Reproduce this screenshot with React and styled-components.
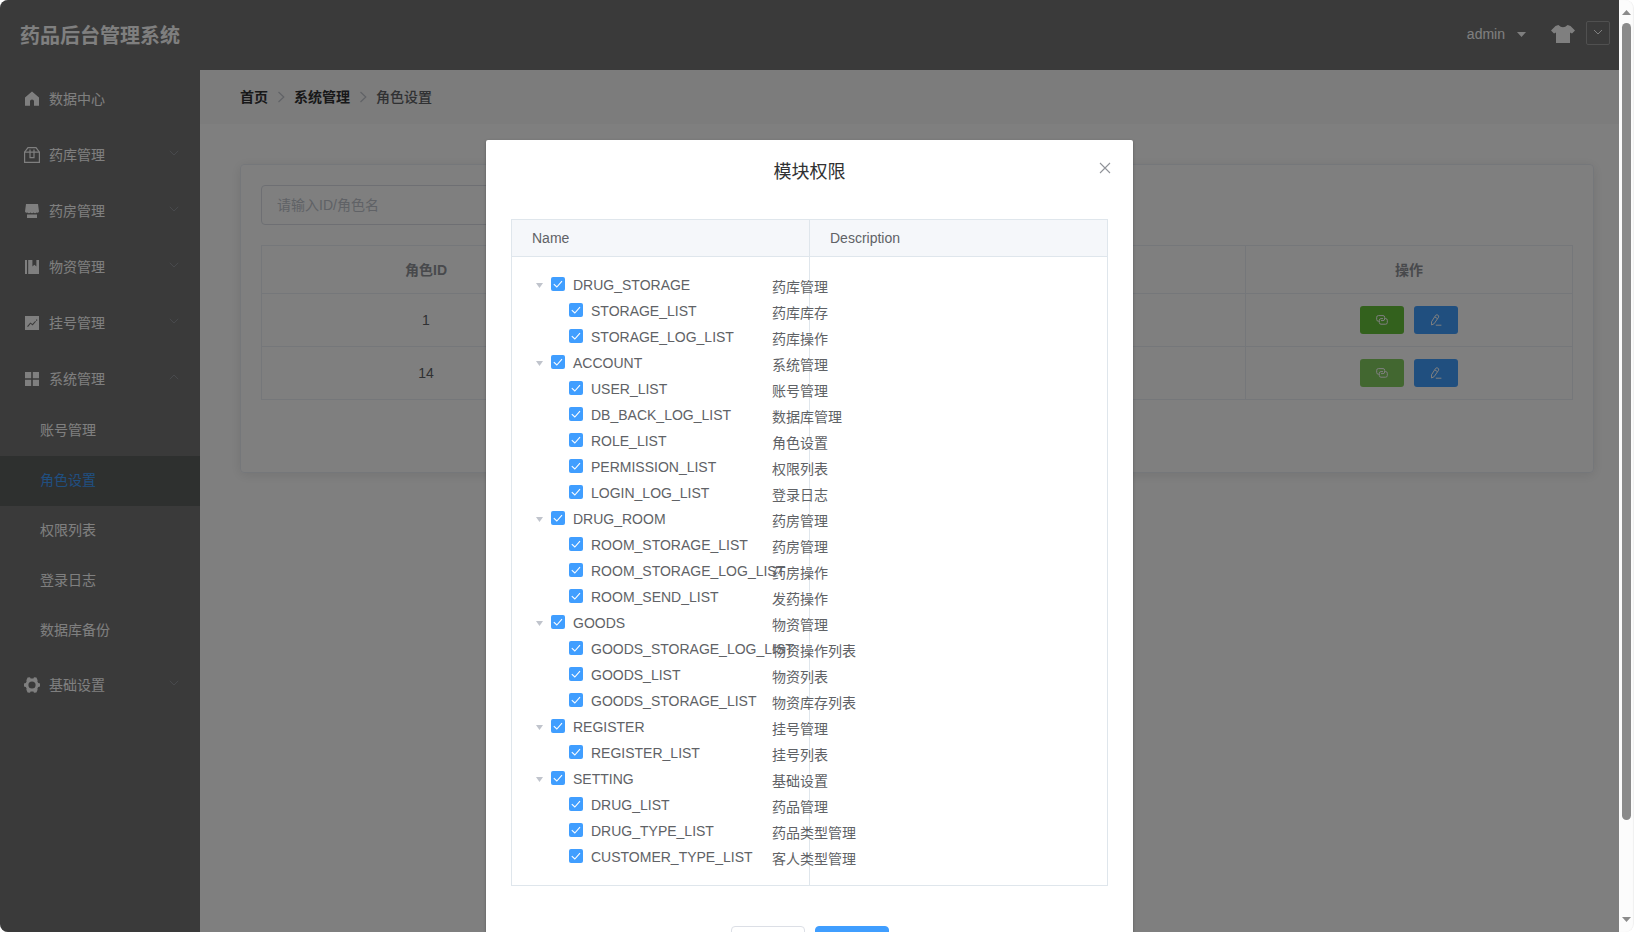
import { useState } from "react";
import styled, { createGlobalStyle } from "styled-components";

const GlobalStyle = createGlobalStyle`
  * {
    box-sizing: border-box;
  }

  body {
    margin: 0;
    background-color: #fff;
    font-family: "Liberation Sans", Arial, "Noto Sans CJK SC", sans-serif;
    font-size: 14px;
    color: #606266;
    overflow: hidden;
  }
`

const Window = styled.div`
  display: flex;
  width: 1634px;
  height: 932px;
  border-radius: 8px;
  overflow: hidden;
`

const Page = styled.div`
  position: relative;
  display: flex;
  flex-direction: column;
  flex: 1;
  min-width: 0;
  background-color: #fff;
  overflow: hidden;
`

const Header = styled.header`
  display: flex;
  align-items: center;
  justify-content: space-between;
  height: 70px;
  flex-shrink: 0;
  padding: 0 9px 0 20px;
  background-color: #747474;
  color: #fff;
`

const Logo = styled.h1`
  margin: 0;
  padding-top: 2px;
  font-size: 20px;
  line-height: 30px;
  font-weight: 700;
`

const HeaderTools = styled.div`
  display: flex;
  align-items: center;
  padding-bottom: 2px;
`

const UserMenu = styled.div`
  display: flex;
  align-items: center;
  gap: 12px;
  margin-right: 25px;
  line-height: 20px;
`

const UserCaret = styled.svg`
  width: 9px;
  height: 5px;
  fill: #fff;
  margin-top: 1px;
`

const Shirt = styled.svg`
  width: 24px;
  height: 18px;
  fill: #fff;
  margin-right: 11px;
`

const ThemeBox = styled.button`
  display: flex;
  align-items: center;
  justify-content: center;
  width: 24px;
  height: 24px;
  padding: 0 0 2px;
  margin-bottom: 2px;
  border: 1px solid #a0a0a0;
  border-radius: 2px;
  background: none;
  color: #fff;
`

const Body = styled.div`
  display: flex;
  flex: 1;
  min-height: 0;
`

const Sidebar = styled.nav`
  width: 200px;
  flex-shrink: 0;
  background-color: #747474;
  color: #fff;
`

const MenuItem = styled.div`
  display: flex;
  align-items: center;
  height: 56px;
  padding: 2px 20px 0;
`

const MenuIcon = styled.svg`
  width: 18px;
  height: 18px;
  margin: 0 8px 0 3px;
  fill: currentColor;
`

const MenuLabel = styled.span`
  flex: 1;
  line-height: 20px;
`

const SubItem = styled.div`
  display: flex;
  align-items: center;
  height: 50px;
  padding: 0 0 4px 40px;
  background-color: ${(props) => (props.$active ? "#5c605f" : "transparent")};
  color: ${(props) => (props.$active ? "#409eff" : "#fff")};
`

const ArrowIcon = styled.svg`
  width: 12px;
  height: 12px;
  margin-bottom: 4px;
  fill: none;
  stroke: #909399;
  transform: ${(props) => (props.$open ? "rotate(180deg)" : "none")};
`

const Main = styled.main`
  flex: 1;
  min-width: 0;
  display: flex;
  flex-direction: column;
`

const Breadcrumb = styled.div`
  display: flex;
  align-items: center;
  height: 54px;
  padding: 0 40px;
  background-color: #f8f8f8;
`

const Crumb = styled.span`
  line-height: 20px;
  color: ${(props) => (props.$link ? "#303133" : "#606266")};
  font-weight: ${(props) => (props.$link ? 700 : 500)};
`

const CrumbArrow = styled.svg`
  width: 14px;
  height: 14px;
  margin: 0 6px;
  fill: none;
  stroke: #c0c4cc;
  stroke-width: 1.2;
`

const Card = styled.section`
  width: 1354px;
  height: 309px;
  margin: 40px;
  padding: 20px;
  border: 1px solid #ebeef5;
  border-radius: 4px;
  box-shadow: 0 2px 12px 0 rgba(0, 0, 0, 0.1);
`

const SearchInput = styled.input`
  display: block;
  width: 300px;
  height: 40px;
  padding: 0 15px;
  margin-bottom: 20px;
  border: 1px solid #dcdfe6;
  border-radius: 4px;
  font: inherit;

  &::placeholder {
    color: #c0c4cc;
  }
`

const RoleTable = styled.div`
  display: grid;
  grid-template-columns: 331px repeat(3, 327px);
  grid-template-rows: 48px 53px 53px;
  border-top: 1px solid #ebeef5;
  box-shadow: inset 1px 0 0 #ebeef5;
`

const RoleCell = styled.div`
  display: flex;
  align-items: center;
  justify-content: center;
  gap: 10px;
  padding-bottom: ${(props) => (props.$head ? 2 : 0)}px;
  border-right: 1px solid #ebeef5;
  border-bottom: 1px solid #ebeef5;
  color: ${(props) => (props.$head ? "#909399" : "#606266")};
  font-weight: ${(props) => (props.$head ? 700 : 400)};
`

const ActionButton = styled.button`
  display: flex;
  align-items: center;
  justify-content: center;
  width: 44px;
  height: 28px;
  padding: 0;
  border: none;
  border-radius: 3px;
  background-color: ${(props) => props.$color};

  svg {
    width: 12px;
    height: 12px;
    fill: none;
    stroke: #fff;
  }
`

const Overlay = styled.div`
  position: absolute;
  inset: 0;
  display: flex;
  align-items: flex-start;
  justify-content: center;
  padding-top: 140px;
  background-color: rgba(0, 0, 0, 0.5);
  overflow: hidden;
`

const Dialog = styled.div`
  flex-shrink: 0;
  width: 647px;
  height: 880px;
  padding: 0 25px;
  border-radius: 2px;
  background-color: #fff;
  box-shadow: 0 1px 3px rgba(0, 0, 0, 0.3);
`

const DialogHeader = styled.div`
  display: grid;
  grid-template-columns: 16px 1fr 16px;
  height: 79px;
  margin: 0 -5px;
  padding-top: 20px;
`

const DialogTitle = styled.h2`
  grid-column: 2;
  margin: 0;
  font-size: 18px;
  line-height: 24px;
  font-weight: 400;
  text-align: center;
  color: #303133;
`

const CloseButton = styled.button`
  width: 16px;
  height: 16px;
  padding: 0;
  border: none;
  background: none;

  svg {
    display: block;
    width: 16px;
    height: 16px;
    stroke: #909399;
    stroke-width: 1.1;
  }
`

const TreeTable = styled.div`
  border: 1px solid #dfe6ec;
`

const TreeHead = styled.div`
  display: grid;
  grid-template-columns: 298px 1fr;
  height: 37px;
  border-bottom: 1px solid #dfe6ec;
  background-color: #f5f7fa;
`

const TreeHeadCell = styled.div`
  padding-left: 20px;
  border-right: ${(props) => (props.$last ? "none" : "1px solid #dfe6ec")};
  line-height: 36px;
`

const TreeBody = styled.div`
  position: relative;
  padding: 15px 0;

  /* column rule, the rows run across it */
  &::before {
    content: "";
    position: absolute;
    top: 0;
    bottom: 0;
    left: 297px;
    width: 1px;
    background-color: #dfe6ec;
  }
`

const TreeRow = styled.div`
  position: relative;
  display: flex;
  height: 26px;
  white-space: nowrap;
`

const NodeName = styled.div`
  display: flex;
  align-items: center;
  width: 260px;
  padding-left: ${(props) => (props.$child ? 57 : 24)}px;
`

const NodeCaret = styled.svg`
  width: 7px;
  height: 5px;
  margin-right: 8px;
  fill: #c0c4cc;
  flex-shrink: 0;
`

const CheckBox = styled.span`
  display: flex;
  align-items: center;
  justify-content: center;
  width: 14px;
  height: 14px;
  margin: 0 8px 2px 0;
  border-radius: 2px;
  background-color: #409eff;
  flex-shrink: 0;

  svg {
    width: 10px;
    height: 10px;
    fill: none;
    stroke: #fff;
    stroke-width: 1.1;
  }
`

const NodeDesc = styled.div`
  line-height: 20px;
  padding-top: 5px;
`

const DialogFooter = styled.div`
  display: flex;
  justify-content: center;
  gap: 10px;
  padding-top: 40px;
`

const FooterButton = styled.button`
  width: 74px;
  height: 40px;
  border: 1px solid ${(props) => (props.$primary ? "#409eff" : "#dcdfe6")};
  border-radius: 4px;
  background-color: ${(props) => (props.$primary ? "#409eff" : "#fff")};
`

const Scrollbar = styled.div`
  display: flex;
  flex-direction: column;
  align-items: center;
  flex-shrink: 0;
  width: 15px;
  padding: 10px 0;
  background-color: #fcfcfc;
  border-radius: 0 8px 8px 0;
  box-shadow: inset -1px 0 1px #f0f0f0;

  svg {
    width: 9px;
    height: 5px;
    fill: #8b8b8b;
  }
`

const Thumb = styled.div`
  width: 9px;
  height: 797px;
  margin: 8px 0 auto;
  border-radius: 5px;
  background-color: #8b8b8b;
`

const icons = {
  home: <path d="M9 1.6 L2 7.6 V15.8 H7 V11.2 Q7 9.4 9 9.4 Q11 9.4 11 11.2 V15.8 H16 V7.6 Z" />,
  box: (
    <g fill="none" stroke="currentColor" strokeWidth="1.2">
      <path d="M1.6 6.2 L5 1.7 H13 L16.4 6.2 V16.3 H1.6 Z" />
      <path d="M1.6 6.2 H16.4" />
      <path d="M7 3.4 V11.6 H11 V3.4" />
    </g>
  ),
  shop: (
    <>
      <path d="M3 2 H15 L16 9.4 Q15 11.6 13.6 10.4 Q12 12 10.5 10.4 Q9 12 7.5 10.4 Q6 12 4.4 10.4 Q3 11.6 2 9.4 Z" />
      <path d="M4 12.4 H14 V16 H4 Z" />
    </>
  ),
  book: (
    <>
      <path d="M2 2 H4 V16 H2 Z" />
      <path d="M5.2 2 H9.4 V8.4 L11.4 6.8 L13.4 8.4 V2 H16 V16 H5.2 Z" />
    </>
  ),
  chart: (
    <path
      fillRule="evenodd"
      d="M2 2 H16 V16 H2 Z M4.1 12.2 L5 13 L7.6 9.8 L9.6 11.4 L13 7.6 L12.2 7 L9.4 10 L7.4 8.4 Z M13 5.6 V6.8 H14.2 V5.6 Z"
    />
  ),
  grid: <path d="M2 2 H8.2 V8.2 H2 Z M9.8 2 H16 V8.2 H9.8 Z M2 9.8 H8.2 V16 H2 Z M9.8 9.8 H16 V16 H9.8 Z" />,
  gear: (
    <path
      fillRule="evenodd"
      d="M4.6 1.4 L7 1.2 L7.6 2.4 H10.4 L11 1.2 L13.4 1.4 L14.6 4.2 L14.4 5.4 L15.2 7 L17 7.4 V10.6 L15.2 11 L14.4 12.6 L14.6 13.8 L13.4 16.6 L11 16.8 L10.4 15.6 H7.6 L7 16.8 L4.6 16.6 L3.4 13.8 L3.6 12.6 L2.8 11 L1 10.6 V7.4 L2.8 7 L3.6 5.4 L3.4 4.2 Z M9 5.4 A3.6 3.6 0 1 0 9 12.6 A3.6 3.6 0 1 0 9 5.4 Z"
    />
  ),
};

const menu = [
  { icon: "home", label: "数据中心" },
  { icon: "box", label: "药库管理", children: [] },
  { icon: "shop", label: "药房管理", children: [] },
  { icon: "book", label: "物资管理", children: [] },
  { icon: "chart", label: "挂号管理", children: [] },
  {
    icon: "grid",
    label: "系统管理",
    open: true,
    children: ["账号管理", "角色设置", "权限列表", "登录日志", "数据库备份"],
  },
  { icon: "gear", label: "基础设置", children: [] },
];

const permissions = [
  {
    name: "DRUG_STORAGE",
    desc: "药库管理",
    children: [
      ["STORAGE_LIST", "药库库存"],
      ["STORAGE_LOG_LIST", "药库操作"],
    ],
  },
  {
    name: "ACCOUNT",
    desc: "系统管理",
    children: [
      ["USER_LIST", "账号管理"],
      ["DB_BACK_LOG_LIST", "数据库管理"],
      ["ROLE_LIST", "角色设置"],
      ["PERMISSION_LIST", "权限列表"],
      ["LOGIN_LOG_LIST", "登录日志"],
    ],
  },
  {
    name: "DRUG_ROOM",
    desc: "药房管理",
    children: [
      ["ROOM_STORAGE_LIST", "药房管理"],
      ["ROOM_STORAGE_LOG_LIST", "药房操作"],
      ["ROOM_SEND_LIST", "发药操作"],
    ],
  },
  {
    name: "GOODS",
    desc: "物资管理",
    children: [
      ["GOODS_STORAGE_LOG_LIST", "物资操作列表"],
      ["GOODS_LIST", "物资列表"],
      ["GOODS_STORAGE_LIST", "物资库存列表"],
    ],
  },
  {
    name: "REGISTER",
    desc: "挂号管理",
    children: [["REGISTER_LIST", "挂号列表"]],
  },
  {
    name: "SETTING",
    desc: "基础设置",
    children: [
      ["DRUG_LIST", "药品管理"],
      ["DRUG_TYPE_LIST", "药品类型管理"],
      ["CUSTOMER_TYPE_LIST", "客人类型管理"],
    ],
  },
];

function Chevron({ open }) {
  return (
    <ArrowIcon viewBox="0 0 12 12" $open={open}>
      <path d="M1.8 3.8 L6 8 L10.2 3.8" />
    </ArrowIcon>
  );
}

function CrumbSeparator() {
  return (
    <CrumbArrow viewBox="0 0 14 14">
      <path d="M4.5 2 L9.8 7 L4.5 12" />
    </CrumbArrow>
  );
}

function SideMenu() {
  const [active, setActive] = useState("角色设置");

  return (
    <Sidebar>
      {menu.map((item) => (
        <div key={item.label}>
          <MenuItem>
            <MenuIcon viewBox="0 0 18 18">{icons[item.icon]}</MenuIcon>
            <MenuLabel>{item.label}</MenuLabel>
            {item.children && <Chevron open={item.open} />}
          </MenuItem>
          {item.open && item.children.map((label) => (
            <SubItem key={label} $active={label === active} onClick={() => setActive(label)}>{label}</SubItem>
          ))}
        </div>
      ))}
    </Sidebar>
  );
}

function RoleRow({ id, linkColor }) {
  return (
    <>
      <RoleCell>{id}</RoleCell>
      <RoleCell />
      <RoleCell />
      <RoleCell>
        <ActionButton $color={linkColor} aria-label="权限">
          <svg viewBox="0 0 12 12">
            <path d="M3.4 7.2 H2.4 Q0.7 7.2 0.7 5.5 V3.3 Q0.7 1.6 2.4 1.6 H7 Q8.7 1.6 8.7 3.3 V5 Q8.7 6.6 7 6.6 H5" />
            <path d="M8.6 4.6 H9.6 Q11.3 4.6 11.3 6.3 V8.5 Q11.3 10.2 9.6 10.2 H5 Q3.3 10.2 3.3 8.5 V6.4 Q3.3 4.6 5 4.6 H7" />
          </svg>
        </ActionButton>
        <ActionButton $color="#409eff" aria-label="编辑">
          <svg viewBox="0 0 12 12">
            <path d="M5.6 1.4 L7 0.7 L8.7 1.8 L8.6 3.2 L4.2 9.6 L1.6 11 L1.5 7.8 Z M5 3 L7.4 4.6 M5.8 11.2 H11.4" />
          </svg>
        </ActionButton>
      </RoleCell>
    </>
  );
}

function TreeNode({ name, desc, child }) {
  return (
    <TreeRow>
      <NodeName $child={child}>
        {!child && (
          <NodeCaret viewBox="0 0 7 5">
            <path d="M0 0 H7 L3.5 5 Z" />
          </NodeCaret>
        )}
        <CheckBox>
          <svg viewBox="0 0 10 10">
            <path d="M0.8 5.2 L3.8 8 L9 2.2" />
          </svg>
        </CheckBox>
        {name}
      </NodeName>
      <NodeDesc>{desc}</NodeDesc>
    </TreeRow>
  );
}

function PermissionDialog() {
  return (
    <Overlay>
      <Dialog>
        <DialogHeader>
          <DialogTitle>模块权限</DialogTitle>
          <CloseButton aria-label="关闭">
            <svg viewBox="0 0 16 16">
              <path d="M3 3 L13 13 M13 3 L3 13" />
            </svg>
          </CloseButton>
        </DialogHeader>
        <TreeTable>
          <TreeHead>
            <TreeHeadCell>Name</TreeHeadCell>
            <TreeHeadCell $last>Description</TreeHeadCell>
          </TreeHead>
          <TreeBody>
            {permissions.map((group) => (
              <div key={group.name}>
                <TreeNode name={group.name} desc={group.desc} />
                {group.children.map(([name, desc]) => (
                  <TreeNode key={name} name={name} desc={desc} child />
                ))}
              </div>
            ))}
          </TreeBody>
        </TreeTable>
        <DialogFooter>
          <FooterButton aria-label="取消" />
          <FooterButton $primary aria-label="确定" />
        </DialogFooter>
      </Dialog>
    </Overlay>
  );
}

export default function App() {
  return (
    <>
      <GlobalStyle />
      <Window>
        <Page>
          <Header>
            <Logo>药品后台管理系统</Logo>
            <HeaderTools>
              <UserMenu>
                admin
                <UserCaret viewBox="0 0 9 5">
                  <path d="M0 0 H9 L4.5 5 Z" />
                </UserCaret>
              </UserMenu>
              <Shirt viewBox="0 0 24 18">
                <path d="M7.4 0 Q12 4.6 16.6 0 L19.5 1 L24 5.4 L21 8.6 L19 7.4 V18 H5 V7.4 L3 8.6 L0 5.4 L4.5 1 Z" />
              </Shirt>
              <ThemeBox aria-label="主题">
                <svg width="10" height="10" viewBox="0 0 10 10" fill="none" stroke="currentColor">
                  <path d="M1 3 L5 7 L9 3" />
                </svg>
              </ThemeBox>
            </HeaderTools>
          </Header>
          <Body>
            <SideMenu />
            <Main>
              <Breadcrumb>
                <Crumb $link>首页</Crumb>
                <CrumbSeparator />
                <Crumb $link>系统管理</Crumb>
                <CrumbSeparator />
                <Crumb>角色设置</Crumb>
              </Breadcrumb>
              <Card>
                <SearchInput placeholder="请输入ID/角色名" />
                <RoleTable>
                  <RoleCell $head>角色ID</RoleCell>
                  <RoleCell $head />
                  <RoleCell $head />
                  <RoleCell $head>操作</RoleCell>
                  <RoleRow id={1} linkColor="#67c23a" />
                  <RoleRow id={14} linkColor="#85ce61" />
                </RoleTable>
              </Card>
            </Main>
          </Body>
          <PermissionDialog />
        </Page>
        <Scrollbar>
          <svg viewBox="0 0 9 5">
            <path d="M0 5 H9 L4.5 0 Z" />
          </svg>
          <Thumb />
          <svg viewBox="0 0 9 5">
            <path d="M0 0 H9 L4.5 5 Z" />
          </svg>
        </Scrollbar>
      </Window>
    </>
  );
}
